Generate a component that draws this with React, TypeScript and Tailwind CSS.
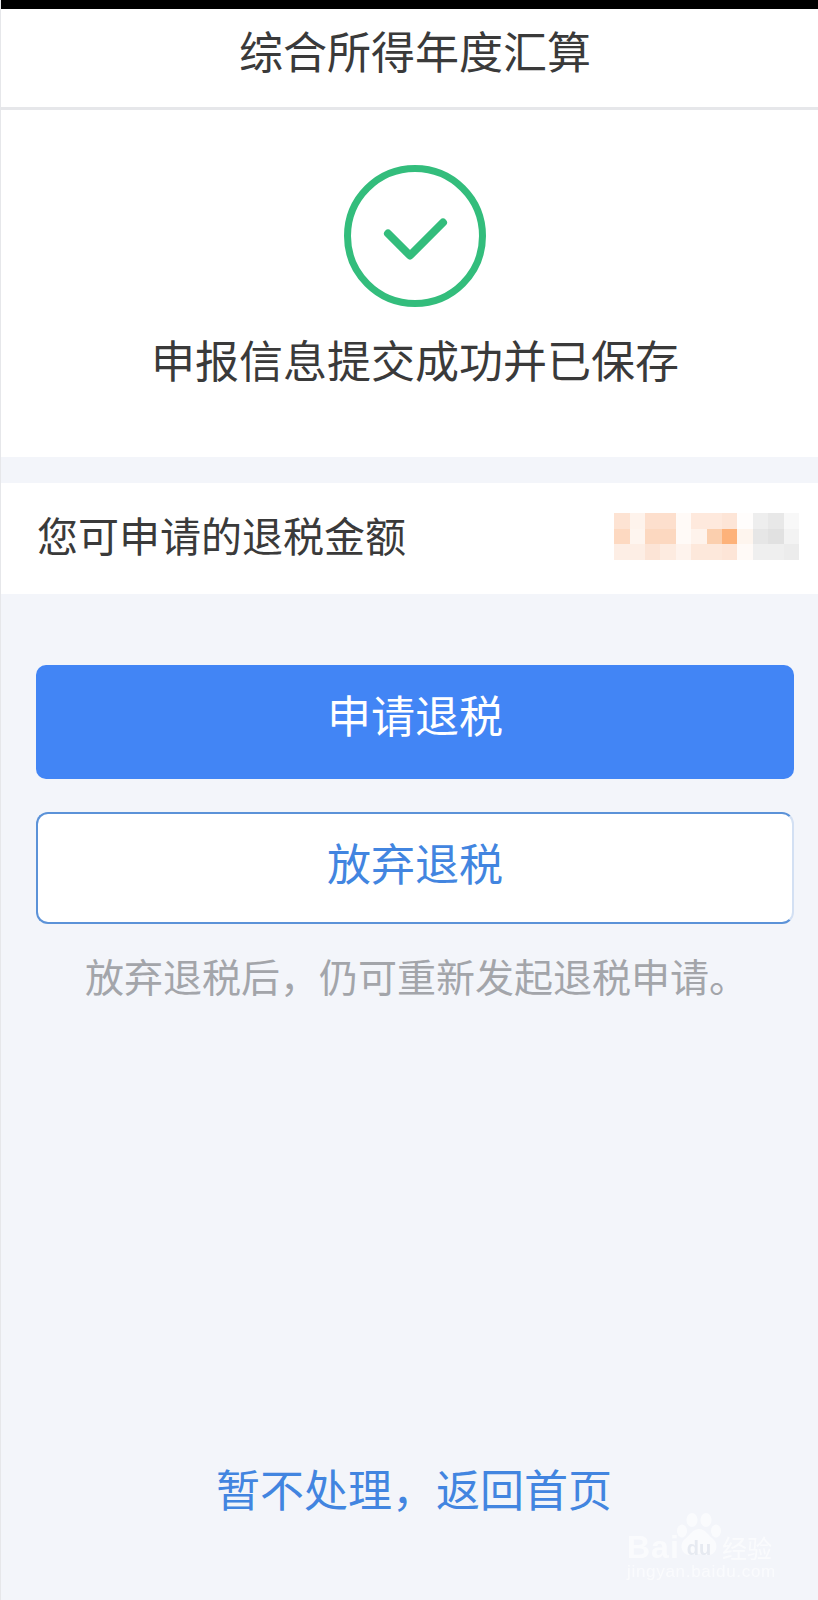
const cjk = "font-['Noto_Sans_CJK_SC','Liberation_Sans',sans-serif]";
const comma = "\uFF0C";

// pixelated amount, 12 x 3 cells
const mosaicCells = [
  "bg-[#fde3d3]", "bg-[#fef3ec]", "bg-[#fddfcd]", "bg-[#fddfcd]", "bg-[#fffaf7]", "bg-[#fee9dd]", "bg-[#fee9dd]", "bg-[#fde5d7]", "bg-[#fffdfc]", "bg-[#eeeeee]", "bg-[#e8e8e8]", "bg-[#f8f8f8]",
  "bg-[#fdd9c1]", "bg-[#fef5ef]", "bg-[#fcd8c0]", "bg-[#fcd8c0]", "bg-[#fffaf7]", "bg-[#fef3ec]", "bg-[#fbcfae]", "bg-[#fdb27a]", "bg-[#fef5ee]", "bg-[#e6e6e6]", "bg-[#e1e1e1]", "bg-[#f3f3f3]",
  "bg-[#fdeee5]", "bg-[#fdeee5]", "bg-[#fce4d6]", "bg-[#fdebe0]", "bg-[#fef3ed]", "bg-[#fde8db]", "bg-[#fde8db]", "bg-[#fde5d7]", "bg-[#fffaf7]", "bg-[#efefef]", "bg-[#efefef]", "bg-[#ececec]",
];

function CheckCircle() {
  return (
    <svg width="144" height="144" viewBox="0 0 144 144" fill="none">
      <circle cx="72" cy="72" r="67.5" stroke="#33bd7c" strokeWidth="7" />
      <path d="M45 69.5 L67 91.5 L100 58.5" stroke="#33bd7c" strokeWidth="8" strokeLinecap="round" strokeLinejoin="round" />
    </svg>
  );
}

function Watermark() {
  return (
    <div className="absolute left-[626px] top-[1512px] w-[150px] h-[72px] text-white opacity-60 select-none">
      <div className="absolute left-0 top-[17px] font-['Liberation_Sans',sans-serif] font-bold text-[32px] leading-[36px] tracking-[1px]">Bai</div>
      <svg className="absolute left-[49px] top-0" width="46" height="48" viewBox="0 0 46 48" fill="#ffffff">
        <ellipse cx="16" cy="8" rx="5.5" ry="7" />
        <ellipse cx="30" cy="8" rx="5.5" ry="7" />
        <ellipse cx="6" cy="19" rx="5" ry="6.5" />
        <ellipse cx="40" cy="19" rx="5" ry="6.5" />
        <path d="M23 17c6 0 9 6 14 10 6 5 4 16-5 16-3 0-6-1-9-1s-6 1-9 1c-9 0-11-11-5-16 5-4 8-10 14-10z" />
      </svg>
      <div className="absolute left-[56px] top-[25px] w-[32px] text-center font-['Liberation_Sans',sans-serif] font-bold text-[20px] leading-[22px] text-[#dfe3ec]">du</div>
      <div className={`absolute left-[95px] top-[17px] text-[25px] leading-[36px] whitespace-nowrap ${cjk}`}>经验</div>
      <div className="absolute left-0 top-[50px] font-['Liberation_Sans',sans-serif] text-[17px] leading-[20px] tracking-[0.7px] whitespace-nowrap">jingyan.baidu.com</div>
    </div>
  );
}

export default function App() {
  return (
    <div className={`relative w-[818px] h-[1600px] bg-[#f3f5fa] border-l border-[#e6e7ea] flex flex-col overflow-hidden ${cjk}`}>
      <div className="h-[9px] shrink-0 bg-black" />

      <div className="h-[101px] shrink-0 bg-white border-b-[3px] border-[#e6e7ea] flex justify-center pl-[11px] pt-[8px]">
        <span className="text-[44px] leading-[66px] text-[#3a3a3a]">综合所得年度汇算</span>
      </div>

      <div className="h-[347px] shrink-0 bg-white flex flex-col items-center pl-[11px] pt-[54px]">
        <CheckCircle />
        <div className="mt-[18px] text-[44px] leading-[66px] text-[#3a3a3a]">申报信息提交成功并已保存</div>
      </div>

      <div className="mt-[26px] h-[111px] shrink-0 bg-white flex items-center justify-between pl-[36px] pr-[19px]">
        <span className="text-[41px] leading-[60px] text-[#3a3a3a] mb-[10px]">您可申请的退税金额</span>
        <div className="grid grid-cols-[repeat(12,15.4px)] auto-rows-[15.4px] mt-[-4px] blur-[0.6px]">
          {mosaicCells.map((c, i) => (
            <div key={i} className={c} />
          ))}
        </div>
      </div>

      <div className="mt-[71px] pl-[35px] pr-[24px] flex flex-col">
        <button className="h-[114px] rounded-[10px] bg-[#4285f5] text-white text-[44px] leading-[64px] pb-[17px]">申请退税</button>
        <button className="mt-[33px] h-[112px] rounded-[12px] border-2 border-[#5b92d8] border-r-[#d3e0f3] bg-white text-[#4285e0] text-[44px] leading-[64px] pb-[13px]">放弃退税</button>
        <p className="mt-[21px] pl-[3px] text-center text-[39px] leading-[60px] text-[#a3a5aa] whitespace-nowrap">放弃退税后{comma}仍可重新发起退税申请。</p>
      </div>

      <div className="mt-auto mb-[79px] flex justify-center pl-[9px]">
        <span className="text-[44px] leading-[66px] text-[#4285e0]">暂不处理{comma}返回首页</span>
      </div>

      <Watermark />
    </div>
  );
}
